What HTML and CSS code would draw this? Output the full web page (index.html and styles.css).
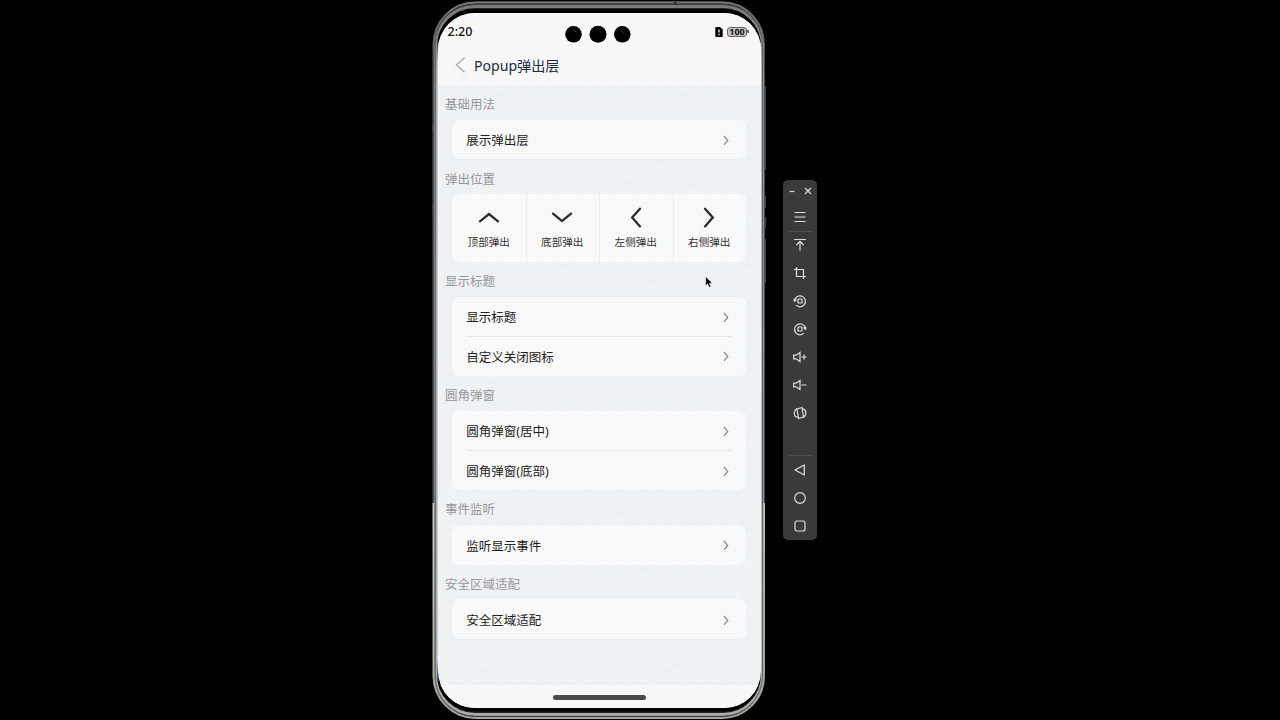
FILE: index.html
```html
<!DOCTYPE html>
<html lang="zh-CN">
<head>
<meta charset="utf-8">
<title>Popup弹出层</title>
<link rel="stylesheet" href="styles.css">
</head>
<body>
<svg class="defs" width="0" height="0">
  <symbol id="next" viewBox="0 0 8 12"><path d="M2 2 5.700 6.400 2 10.800" fill="none" stroke="#85868a" stroke-width="1.200"/></symbol>
</svg>
<main class="desktop">
  <section class="phone">
    <svg class="frame" width="336" height="720" viewBox="431 0 336 720" fill="none">
      <defs>
        <linearGradient id="rim" x1="0" y1="0" x2="0" y2="720" gradientUnits="userSpaceOnUse">
          <stop offset="0" stop-color="#777"/><stop offset=".08" stop-color="#555"/><stop offset=".698" stop-color="#4d4d4d"/><stop offset=".699" stop-color="#d0d0ca"/><stop offset="1" stop-color="#a5a5a0"/>
        </linearGradient>
        <linearGradient id="inner" x1="0" y1="0" x2="0" y2="720" gradientUnits="userSpaceOnUse">
          <stop offset="0" stop-color="#777"/><stop offset=".12" stop-color="#a4a4a4"/><stop offset="1" stop-color="#aaa"/>
        </linearGradient>
        <linearGradient id="edge" x1="0" y1="36" x2="0" y2="686" gradientUnits="userSpaceOnUse">
          <stop offset="0" stop-color="#ccc" stop-opacity="0"/><stop offset=".04" stop-color="#ccc"/><stop offset=".96" stop-color="#ccc"/><stop offset="1" stop-color="#ccc" stop-opacity="0"/>
        </linearGradient>
      </defs>
      <path d="M432.700 124v7M432.700 205v10M765.500 86v84M765.500 196v12M765.500 217v11M765.500 239v44" stroke="#444"/>
      <rect x="432.500" y="1" width="332.500" height="718" rx="43" fill="#242424"/>
      <rect x="433.500" y="2.500" width="330.500" height="715.500" rx="42" stroke="url(#rim)" stroke-width="1.800"/>
      <rect x="435.700" y="6.500" width="326.500" height="708" rx="39" stroke="url(#inner)" stroke-width="3"/>
      <rect x="435.200" y="4.300" width="327.200" height="712" rx="40" stroke="#484848" stroke-width=".8"/>
      <rect x="437" y="9" width="324" height="702.500" rx="37" fill="#000"/>
      <rect x="437" y="36" width="1.300" height="650" fill="url(#edge)"/>
      <rect x="760.300" y="36" width="1.300" height="650" fill="url(#edge)"/>
      <path d="M675.500 2v2" stroke="#222" stroke-width="2"/>
    </svg>
    <div class="screen">
      <header class="top">
        <div class="status">
          <time class="time">2:20</time>
          <svg class="cameras" width="68" height="20" viewBox="0 0 68 20"><circle cx="9.500" cy="10.300" r="8.300"/><circle cx="34" cy="10.300" r="8.500"/><circle cx="58.300" cy="10.300" r="8.300"/><path d="m10 6 2.500 2.500M57 6l2.500 2.500" stroke="#444"/></svg>
          <div class="power">
            <svg width="8" height="10" viewBox="0 0 8 10"><path d="M.3 1Q.3 0 1.300 0H5l2.700 2.500V9q0 1-1 1H1.300q-1 0-1-1Z"/><path d="M4 2.400v3M4 6.800v1.400" stroke="#fff" stroke-width="1.300"/></svg>
            <span class="battery">100</span>
          </div>
        </div>
        <div class="nav">
          <svg width="12" height="18" viewBox="0 0 12 18"><path d="M10.500 1.800 2.500 9l8 7.200" fill="none" stroke="#aaa" stroke-width="1.400"/></svg>
          <h1 class="name">Popup弹出层</h1>
        </div>
      </header>
      <div class="content">
        <h2 class="label">基础用法</h2>
        <div class="card"><div class="cell"><span>展示弹出层</span><svg class="arrow"><use href="#next"/></svg></div></div>
        <h2 class="label">弹出位置</h2>
        <div class="card grid">
          <div class="tile"><svg class="dir" viewBox="0 0 22 22"><path d="m2 14.300 9-7.300 9 7.300"/></svg><span>顶部弹出</span></div>
          <div class="tile"><svg class="dir" viewBox="0 0 22 22"><path d="m2 6.600 9 7.500 9-7.500"/></svg><span>底部弹出</span></div>
          <div class="tile"><svg class="dir" viewBox="0 0 22 22"><path d="M15 1.800 7.200 10.600l7.800 8.800"/></svg><span>左侧弹出</span></div>
          <div class="tile"><svg class="dir" viewBox="0 0 22 22"><path d="m7 1.800 7.800 8.800L7 19.400"/></svg><span>右侧弹出</span></div>
        </div>
        <h2 class="label">显示标题</h2>
        <div class="card">
          <div class="cell"><span>显示标题</span><svg class="arrow"><use href="#next"/></svg></div>
          <div class="cell"><span>自定义关闭图标</span><svg class="arrow"><use href="#next"/></svg></div>
        </div>
        <h2 class="label">圆角弹窗</h2>
        <div class="card">
          <div class="cell"><span>圆角弹窗(居中)</span><svg class="arrow"><use href="#next"/></svg></div>
          <div class="cell"><span>圆角弹窗(底部)</span><svg class="arrow"><use href="#next"/></svg></div>
        </div>
        <h2 class="label">事件监听</h2>
        <div class="card"><div class="cell"><span>监听显示事件</span><svg class="arrow"><use href="#next"/></svg></div></div>
        <h2 class="label">安全区域适配</h2>
        <div class="card"><div class="cell"><span>安全区域适配</span><svg class="arrow"><use href="#next"/></svg></div></div>
      </div>
      <footer class="bottom"><div class="handle"></div></footer>
    </div>
  </section>
  <aside class="tools">
    <div class="window">
      <svg width="8" height="10" viewBox="0 0 8 10"><path d="M1.500 5.500h5"/></svg>
      <svg width="8" height="10" viewBox="0 0 8 10"><path d="m1 2 6 6M7 2 1 8"/></svg>
    </div>
    <svg class="tool menu" viewBox="0 0 14 14"><path d="M1.500 2.500h11M1.500 7h11M1.500 11.500h11"/></svg>
    <div class="rule"></div>
    <svg class="tool" viewBox="0 0 14 14"><path d="M1 1.500h12M7 12.500V3.500M3.300 7 7 3.300 10.700 7"/></svg>
    <svg class="tool" viewBox="0 0 14 14"><path d="M1 3.500H10.500V13M3.500 1V10.500H13"/></svg>
    <svg class="tool" viewBox="0 0 14 14"><path d="M1.700 8V4.500M1.700 5.500A5.500 5.500 0 1 1 3 11.200M.5 5.500l1.200 1.500 1.800-1.500"/><rect x="5" y="5" width="4" height="4" rx=".5"/></svg>
    <svg class="tool" viewBox="0 0 14 14"><path d="M12.300 8V4.500M12.300 5.500A5.500 5.500 0 1 0 11 11.200M13.500 5.500l-1.200 1.500-1.800-1.500"/><rect x="5" y="5" width="4" height="4" rx=".5"/></svg>
    <svg class="tool" viewBox="0 0 14 14"><path d="M.7 5.200h2.500L7 2.500v9L3.200 8.800H.7ZM8.500 7h5M11 4.500v5"/></svg>
    <svg class="tool" viewBox="0 0 14 14"><path d="M.7 5.200h2.500L7 2.500v9L3.200 8.800H.7ZM8.500 7h5"/></svg>
    <svg class="tool" viewBox="0 0 14 14"><path d="m4 3 5-1.500 1.500 9.500-5 1.500ZM4 2.500A6 6 0 0 0 2 10l2.500 1.500M10.500 11.500A6 6 0 0 0 12 4L9.500 2.500"/></svg>
    <div class="space"></div>
    <div class="rule"></div>
    <svg class="tool" viewBox="0 0 14 14"><path d="M11.300 2v10L2 7Z" stroke-linejoin="round"/></svg>
    <svg class="tool" viewBox="0 0 14 14"><circle cx="7" cy="7" r="5.300"/></svg>
    <svg class="tool last" viewBox="0 0 14 14"><rect x="2" y="2" width="10" height="10" rx="2"/></svg>
  </aside>
  <svg class="cursor" width="8" height="12" viewBox="0 0 8 12"><path d="M.7.700v8.800l2-1.700 1.500 3.400 1.600-.7-1.500-3.300H7.200Z" fill="#000" stroke="#fff" stroke-width=".4"/></svg>
</main>
</body>
</html>
```
FILE: styles.css
```css
* { box-sizing: border-box; }
body { margin: 0; background: #000; font-family: "Noto Sans", "Noto Sans CJK SC", sans-serif; }
svg { display: block; flex: none; }
.defs { position: absolute; }
.desktop { position: relative; width: 1280px; height: 720px; overflow: hidden; display: flex; align-items: flex-start; gap: 16px; padding-left: 431px; }
.phone { position: relative; width: 336px; height: 720px; padding: 13px 6px 12px 7px; flex: none; }
.frame { position: absolute; left: 0; top: 0; }
.screen { position: relative; width: 322.500px; height: 695px; border-radius: 37px; overflow: hidden; background: #f0f1f3; display: flex; flex-direction: column; }
.top { height: 72px; background: #f8f8f8; flex: none; }
.status { height: 37px; position: relative; display: flex; justify-content: space-between; align-items: center; padding: 0 13.500px 0 9.500px; }
.time { font-size: 12.500px; font-weight: 500; color: #111; line-height: 16px; }
.cameras { position: absolute; left: 126px; top: 11px; }
.power { display: flex; align-items: center; gap: 4px; }
.battery { position: relative; width: 20px; height: 10px; border: 1px solid #666; border-radius: 3px; background: #c4c4c4; font: bold 9px/8px "Noto Sans", sans-serif; text-align: center; color: #111; display: flex; justify-content: center; }
.battery::after { content: ""; position: absolute; right: -2.500px; top: 2.500px; width: 1.500px; height: 3px; background: #666; }
.nav { display: flex; align-items: center; height: 30px; padding-left: 16px; gap: 8px; }
.name { margin: 0; padding-top: 1px; font-size: 14.100px; font-weight: 400; line-height: 20px; color: #232a3c; }
.content { flex: 1; padding: 0 14.500px 0 14px; background: repeating-linear-gradient(148deg, transparent 0 6px, rgba(255, 255, 255, .18) 6.500px 7px, transparent 7.500px); }
.label { height: 34.900px; margin: 0 0 0 -7px; padding-top: 11.300px; font-size: 12.500px; line-height: 18px; font-weight: 400; color: #96979a; }
.card { border-radius: 7px; background: #f9f9f9; overflow: hidden; }
.cell { position: relative; height: 39.600px; display: flex; align-items: center; justify-content: space-between; padding: 3.600px 16px 0 14.200px; font-size: 12.500px; line-height: 18px; color: #222; }
.cell + .cell::before { content: ""; position: absolute; left: 14px; right: 14px; top: -.5px; height: 1px; background: #e7e8ea; }
.arrow { width: 8px; height: 12px; margin-top: -3px; }
.grid { height: 67.500px; display: grid; grid-template-columns: repeat(4, 1fr); }
.tile { display: flex; flex-direction: column; align-items: center; padding-top: 12.500px; gap: 5.500px; font-size: 10.600px; line-height: 16px; color: #333; }
.tile + .tile { border-left: 1px solid #ebecee; padding-right: 1px; }
.dir { width: 22px; height: 22px; fill: none; stroke: #2b2c2e; stroke-width: 2.300; stroke-linecap: round; }
.bottom { height: 23px; flex: none; background: #f8f8f8; display: flex; justify-content: center; padding-top: 10px; }
.handle { width: 93px; height: 5px; border-radius: 3px; background: #4b4b4b; }
.tools { width: 34px; height: 359.500px; margin-top: 180px; border-radius: 5px; background: #3a3a3a; display: flex; flex-direction: column; align-items: center; padding-top: 6px; fill: none; stroke: #ddd; stroke-width: 1.200; flex: none; }
.window { display: flex; gap: 8px; height: 10px; margin-bottom: 14px; flex: none; }
.tool { width: 14px; height: 14px; margin-bottom: 14px; }
.menu { margin-bottom: 7px; }
.last { margin-bottom: 0; }
.rule { width: 23px; height: 1px; background: #505050; margin-bottom: 6.300px; flex: none; }
.space { height: 21px; flex: none; }
.cursor { position: absolute; left: 704.500px; top: 276px; }
```
